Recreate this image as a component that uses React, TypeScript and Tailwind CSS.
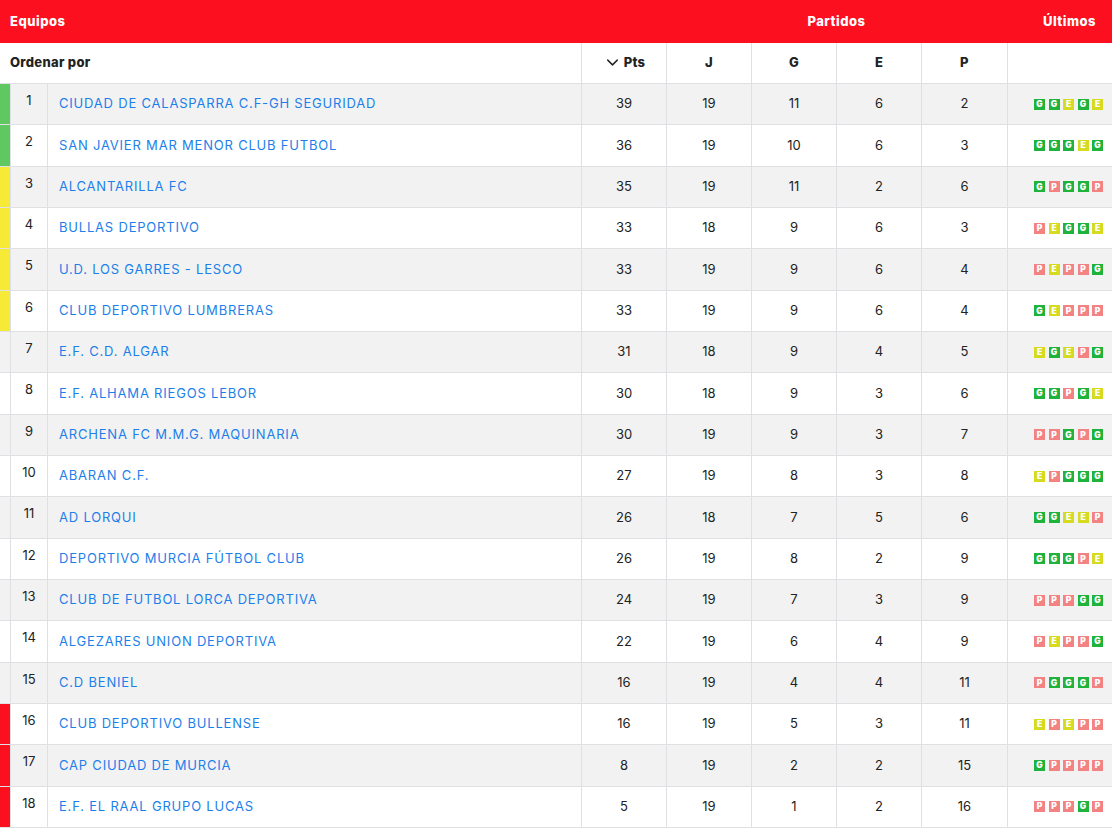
import { ChevronDown } from "lucide-react";

type Team = { pos: number; name: string; pts: number; j: number; g: number; e: number; p: number; last: string; zone?: "green" | "yellow" | "red" };

const teams: Team[] = [
  { pos: 1, name: "CIUDAD DE CALASPARRA C.F-GH SEGURIDAD", pts: 39, j: 19, g: 11, e: 6, p: 2, last: "GGEGE", zone: "green" },
  { pos: 2, name: "SAN JAVIER MAR MENOR CLUB FUTBOL", pts: 36, j: 19, g: 10, e: 6, p: 3, last: "GGGEG", zone: "green" },
  { pos: 3, name: "ALCANTARILLA FC", pts: 35, j: 19, g: 11, e: 2, p: 6, last: "GPGGP", zone: "yellow" },
  { pos: 4, name: "BULLAS DEPORTIVO", pts: 33, j: 18, g: 9, e: 6, p: 3, last: "PEGGE", zone: "yellow" },
  { pos: 5, name: "U.D. LOS GARRES - LESCO", pts: 33, j: 19, g: 9, e: 6, p: 4, last: "PEPPG", zone: "yellow" },
  { pos: 6, name: "CLUB DEPORTIVO LUMBRERAS", pts: 33, j: 19, g: 9, e: 6, p: 4, last: "GEPPP", zone: "yellow" },
  { pos: 7, name: "E.F. C.D. ALGAR", pts: 31, j: 18, g: 9, e: 4, p: 5, last: "EGEPG" },
  { pos: 8, name: "E.F. ALHAMA RIEGOS LEBOR", pts: 30, j: 18, g: 9, e: 3, p: 6, last: "GGPGE" },
  { pos: 9, name: "ARCHENA FC M.M.G. MAQUINARIA", pts: 30, j: 19, g: 9, e: 3, p: 7, last: "PPGPG" },
  { pos: 10, name: "ABARAN C.F.", pts: 27, j: 19, g: 8, e: 3, p: 8, last: "EPGGG" },
  { pos: 11, name: "AD LORQUI", pts: 26, j: 18, g: 7, e: 5, p: 6, last: "GGEEP" },
  { pos: 12, name: "DEPORTIVO MURCIA FÚTBOL CLUB", pts: 26, j: 19, g: 8, e: 2, p: 9, last: "GGGPE" },
  { pos: 13, name: "CLUB DE FUTBOL LORCA DEPORTIVA", pts: 24, j: 19, g: 7, e: 3, p: 9, last: "PPPGG" },
  { pos: 14, name: "ALGEZARES UNION DEPORTIVA", pts: 22, j: 19, g: 6, e: 4, p: 9, last: "PEPPG" },
  { pos: 15, name: "C.D BENIEL", pts: 16, j: 19, g: 4, e: 4, p: 11, last: "PGGGP" },
  { pos: 16, name: "CLUB DEPORTIVO BULLENSE", pts: 16, j: 19, g: 5, e: 3, p: 11, last: "EPEPP", zone: "red" },
  { pos: 17, name: "CAP CIUDAD DE MURCIA", pts: 8, j: 19, g: 2, e: 2, p: 15, last: "GPPPP", zone: "red" },
  { pos: 18, name: "E.F. EL RAAL GRUPO LUCAS", pts: 5, j: 19, g: 1, e: 2, p: 16, last: "PPPGP", zone: "red" },
];

const grid = "grid grid-cols-[10px_37px_534px_85px_85px_85px_85px_86px_105px]";

const zoneClass = (z?: Team["zone"]) =>
  z === "green" ? "bg-[#5fc860]" : z === "yellow" ? "bg-[#f7ea37]" : z === "red" ? "bg-[#fc0f1f]" : "";

const Badge = ({ r }: { r: string }) => {
  const color = r === "G" ? "bg-[#1fb33b]" : r === "E" ? "bg-[#d6db1f]" : "bg-[#f38383]";
  return (
    <span className={`${color} w-[11px] h-[11px] shrink-0 flex items-center justify-center text-white text-[8.5px] font-black leading-none`}>
      {r}
    </span>
  );
};

const NumCell = ({ v }: { v: number }) => (
  <div className="border-l border-[#dfe0e3] flex items-center justify-center text-[13px] text-[#222]">{v}</div>
);

export default function App() {
  return (
    <div className="w-[1112px] h-[828px] overflow-hidden bg-white font-['Inter',sans-serif]">
      <div className="h-[43px] bg-[#fc0f1f] text-white text-[13px] font-extrabold tracking-[0.5px] grid grid-cols-[581px_85px_341px_105px] items-center">
        <div className="pl-[10px]">Equipos</div>
        <div />
        <div className="text-center">Partidos</div>
        <div className="text-right pr-[16px]">Últimos</div>
      </div>
      <div className={`${grid} h-[41px] border-b border-[#dfe0e3] text-[13px] font-extrabold tracking-[0.3px] text-[#222]`}>
        <div className="col-span-3 flex items-center pl-[10px]">Ordenar por</div>
        <div className="border-l border-[#dfe0e3] flex items-center justify-center gap-[2px]">
          <ChevronDown size={19} strokeWidth={1.8} className="-mt-[1px]" />
          Pts
        </div>
        <div className="border-l border-[#dfe0e3] flex items-center justify-center">J</div>
        <div className="border-l border-[#dfe0e3] flex items-center justify-center">G</div>
        <div className="border-l border-[#dfe0e3] flex items-center justify-center">E</div>
        <div className="border-l border-[#dfe0e3] flex items-center justify-center">P</div>
        <div className="border-l border-[#dfe0e3]" />
      </div>
      {teams.map((t, i) => (
        <div
          key={t.pos}
          className={`${grid} h-[41.33px] border-b border-[#dfe0e3] ${i % 2 === 0 ? "bg-[#f2f2f2]" : "bg-white"}`}
        >
          <div className={zoneClass(t.zone)} />
          <div className="border-l border-[#dfe0e3] text-center text-[13px] text-[#222] pt-[7px]">{t.pos}</div>
          <div className="border-l border-[#dfe0e3] flex items-center pl-[11px] text-[13px] tracking-[0.8px] text-[#1c7fea]">
            {t.name}
          </div>
          <NumCell v={t.pts} />
          <NumCell v={t.j} />
          <NumCell v={t.g} />
          <NumCell v={t.e} />
          <NumCell v={t.p} />
          <div className="border-l border-[#dfe0e3] flex items-center justify-end pr-[9px] gap-[3.5px]">
            {t.last.split("").map((r, k) => (
              <Badge key={k} r={r} />
            ))}
          </div>
        </div>
      ))}
    </div>
  );
}
